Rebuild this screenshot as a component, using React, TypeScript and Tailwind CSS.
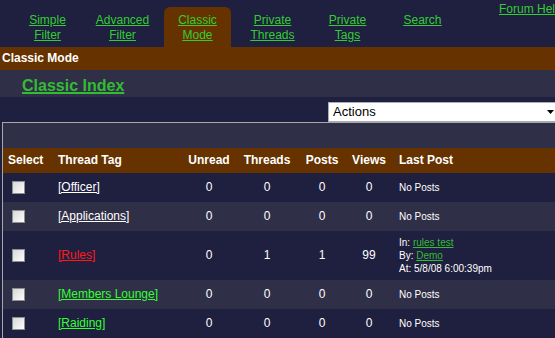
import React from "react";

interface ThreadRow {
  tag: string;
  tagColor: string;
  unread: number;
  threads: number;
  posts: number;
  views: number;
  last?: { thread: string; by: string; at: string };
  bg: string;
  h: string;
}

const navTabs = [
  ["Simple", "Filter"],
  ["Advanced", "Filter"],
  ["Classic", "Mode"],
  ["Private", "Threads"],
  ["Private", "Tags"],
  ["Search"],
];

const rows: ThreadRow[] = [
  { tag: "[Officer]", tagColor: "text-white", unread: 0, threads: 0, posts: 0, views: 0, bg: "bg-[#1f1f3f]", h: "h-[29px]" },
  { tag: "[Applications]", tagColor: "text-white", unread: 0, threads: 0, posts: 0, views: 0, bg: "bg-[#2f2f47]", h: "h-[29px]" },
  {
    tag: "[Rules]",
    tagColor: "text-[#ff1a1a]",
    unread: 0,
    threads: 1,
    posts: 1,
    views: 99,
    last: { thread: "rules test", by: "Demo", at: "5/8/08 6:00:39pm" },
    bg: "bg-[#1f1f3f]",
    h: "h-[49px]",
  },
  { tag: "[Members Lounge]", tagColor: "text-[#33ff33]", unread: 0, threads: 0, posts: 0, views: 0, bg: "bg-[#2f2f47]", h: "h-[29px]" },
  { tag: "[Raiding]", tagColor: "text-[#33ff33]", unread: 0, threads: 0, posts: 0, views: 0, bg: "bg-[#1f1f3f]", h: "h-[29px]" },
];

const cols = "grid grid-cols-[49px_129px_56px_60px_50px_44px_1fr] items-center";

function Checkbox() {
  return (
    <div className="ml-[9px] w-[13px] h-[13px] border border-[#8e8f8f] bg-gradient-to-br from-[#d4d4d4] to-white p-[1px]">
      <div className="w-full h-full bg-gradient-to-br from-[#dcdcdc] to-[#f8f8f8]" />
    </div>
  );
}

export default function App() {
  return (
    <div className="w-[555px] h-[338px] overflow-hidden bg-[#1f1f3f] text-white font-['Liberation_Sans',Arial,sans-serif]">
      {/* Top tabs */}
      <div className="flex items-start h-[47px]">
        <div className="flex mt-[7px] pl-[10px] shrink-0">
          {navTabs.map((lines, i) => (
            <div key={i} className="w-[75px] px-[4px]">
              <div
                className={`h-[40px] pt-[6px] rounded-t-[6px] text-center text-[12px] leading-[15px] ${
                  i === 2 ? "bg-[#663300]" : ""
                }`}
              >
                <a className="text-[#33cc33] underline">
                  {lines.map((l, j) => (
                    <div key={j}>
                      <span className="underline">{l}</span>
                    </div>
                  ))}
                </a>
              </div>
            </div>
          ))}
        </div>
        <a className="ml-[39px] mt-[2px] shrink-0 whitespace-nowrap text-[12px] leading-[15px] text-[#33cc33] underline">
          Forum Help
        </a>
      </div>

      {/* Section bars */}
      <div className="h-[23px] bg-[#663300] pl-[2px] flex items-center text-[12px] font-bold leading-[15px]">
        Classic Mode
      </div>
      <div className="h-[27px] bg-[#2f2f47] pl-[22px] pt-[4px]">
        <a className="text-[16px] leading-[20px] font-bold text-[#33bb33] underline decoration-2">Classic Index</a>
      </div>

      {/* Actions select */}
      <div className="mt-[5px] ml-[328px] w-[232px] h-[20px] bg-white border border-[#a5acb2] flex items-center justify-between pl-[4px] pr-[5px] text-black text-[13px] leading-[16px]">
        <span>Actions</span>
        <svg width="7" height="4" viewBox="0 0 7 4">
          <path d="M0 0h7L3.5 4z" fill="#000" />
        </svg>
      </div>

      {/* Table */}
      <div className="ml-[2px] border-l border-t border-[#a8a8a8]">
        <div className="h-[25px] bg-[#2f2f47]" />
        <div className={`${cols} h-[25px] bg-[#663300] text-[12px] font-bold leading-[15px]`}>
          <div className="pl-[5px]">Select</div>
          <div className="pl-[6px]">Thread Tag</div>
          <div className="text-center">Unread</div>
          <div className="text-center">Threads</div>
          <div className="text-center">Posts</div>
          <div className="text-center">Views</div>
          <div className="pl-[8px]">Last Post</div>
        </div>
        {rows.map((r) => (
          <div key={r.tag} className={`${cols} ${r.h} ${r.bg} text-[12px] leading-[15px]`}>
            <Checkbox />
            <div className="pl-[6px]">
              <a className={`${r.tagColor} underline`}>{r.tag}</a>
            </div>
            <div className="text-center">{r.unread}</div>
            <div className="text-center">{r.threads}</div>
            <div className="text-center">{r.posts}</div>
            <div className="text-center">{r.views}</div>
            <div className="pl-[8px] text-[10px] leading-[13px] whitespace-nowrap">
              {r.last ? (
                <>
                  <div>
                    In: <a className="text-[#33bb33] underline">{r.last.thread}</a>
                  </div>
                  <div>
                    By: <a className="text-[#33bb33] underline">{r.last.by}</a>
                  </div>
                  <div>At: {r.last.at}</div>
                </>
              ) : (
                "No Posts"
              )}
            </div>
          </div>
        ))}
      </div>
    </div>
  );
}
